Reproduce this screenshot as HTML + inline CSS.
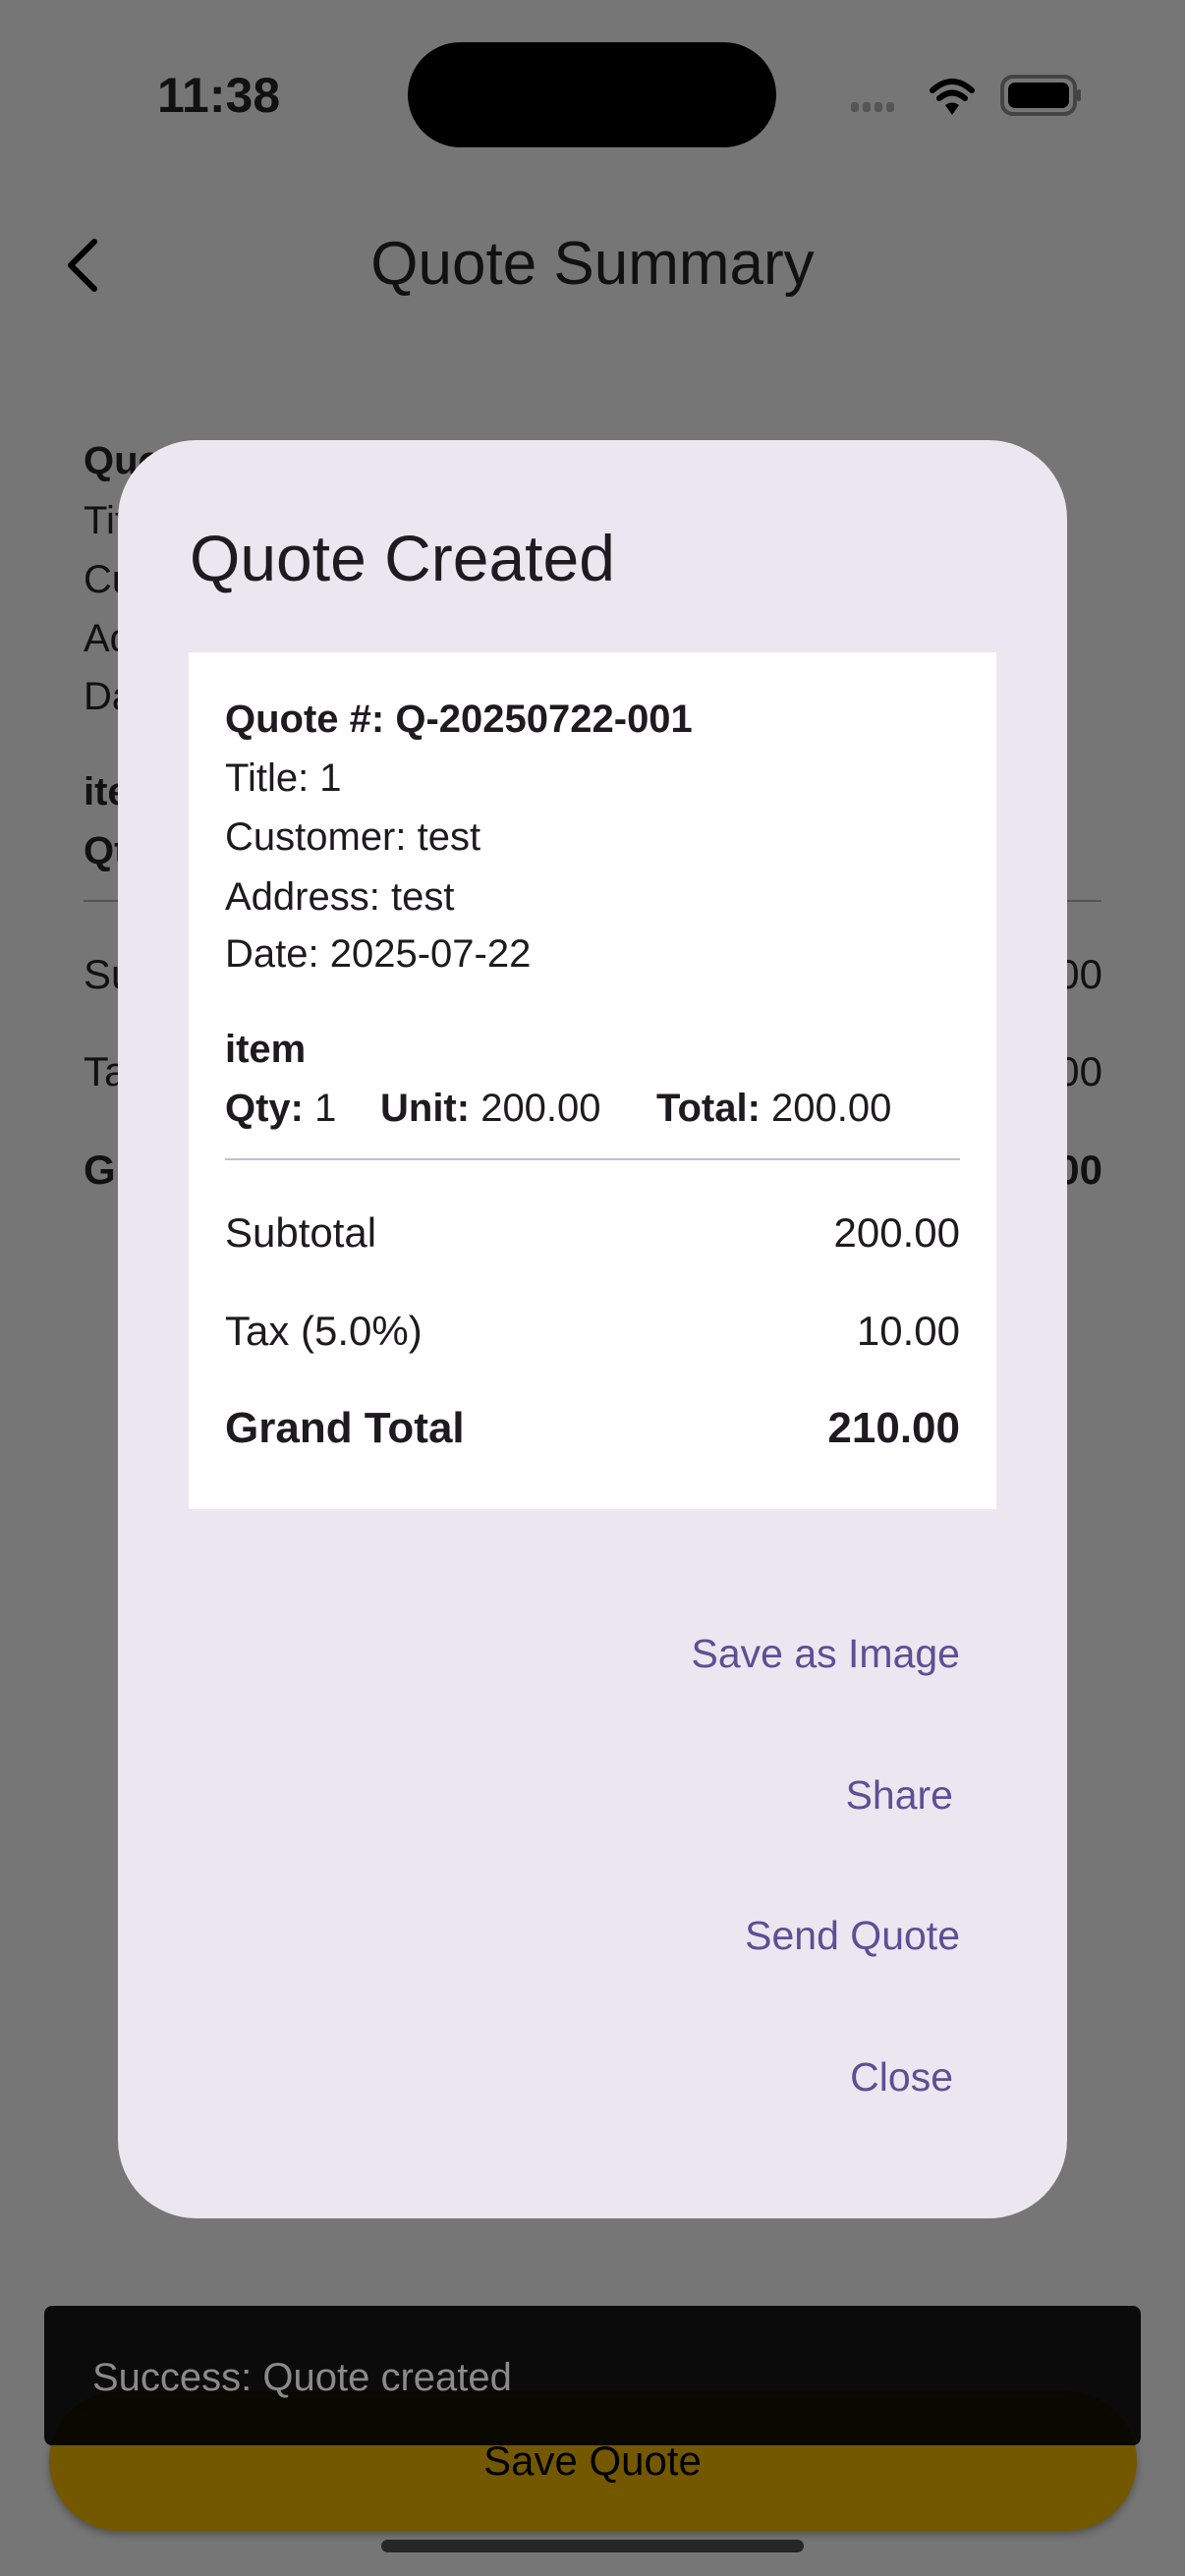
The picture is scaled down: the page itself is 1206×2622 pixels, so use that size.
<!DOCTYPE html>
<html><head><meta charset="utf-8"><style>
*{margin:0;padding:0;box-sizing:border-box}
body{width:1206px;height:2622px;background:#767676;position:relative;overflow:hidden;font-family:"Liberation Sans",sans-serif;color:#1d1b20}
.a{position:absolute;white-space:nowrap}
.bg{left:85px;font-size:40px;color:#111}
.c{left:229px;font-size:40px;color:#1d1b20}
.r{right:229px;font-size:42px;text-align:right}
.btn{font-size:41px;color:#5d4f93}
</style></head><body>
<div class="a" style="left:160px;top:68px;font-size:50px;font-weight:bold;color:#111">11:38</div>
<div class="a" style="left:415px;top:43px;width:375px;height:107px;border-radius:54px;background:#000"></div>
<svg class="a" style="left:860px;top:70px" width="240" height="60" viewBox="0 0 240 60">
<g fill="#555"><rect x="6" y="34" width="8" height="10" rx="3"/><rect x="18" y="34" width="8" height="10" rx="3"/><rect x="30" y="34" width="8" height="10" rx="3"/><rect x="42" y="34" width="8" height="10" rx="3"/></g>
<g fill="none" stroke="#000" stroke-width="6" stroke-linecap="round"><path d="M89 22 Q109 4 129 22"/><path d="M96 30 Q109 19 122 30"/></g>
<path d="M102 37 L109 47 L116 37 Q109 32 102 37Z" fill="#000"/>
<rect x="160" y="8" width="74" height="38" rx="11" fill="none" stroke="#444" stroke-width="4"/>
<rect x="166" y="14" width="62" height="26" rx="7" fill="#000"/>
<rect x="236" y="21" width="4" height="12" rx="2" fill="#444"/>
</svg>
<svg class="a" style="left:62px;top:240px" width="44" height="60" viewBox="0 0 44 60"><path d="M34 6 L10 30 L34 54" fill="none" stroke="#000" stroke-width="6" stroke-linecap="round" stroke-linejoin="round"/></svg>
<div class="a" style="left:0;width:1206px;text-align:center;top:233px;font-size:62px;color:#111">Quote Summary</div>

<div class="a bg" style="top:447px;font-weight:bold">Quote</div>
<div class="a bg" style="top:508px">Title</div>
<div class="a bg" style="top:568px">Customer</div>
<div class="a bg" style="top:628px">Address</div>
<div class="a bg" style="top:687px">Date</div>
<div class="a bg" style="top:784px;font-weight:bold">item</div>
<div class="a bg" style="top:844px;font-weight:bold">Qty</div>
<div class="a" style="left:85px;width:1036px;top:916px;height:2px;background:#555"></div>
<div class="a bg" style="top:968px;font-size:42px">Subtotal</div>
<div class="a" style="right:84px;top:968px;font-size:42px;color:#111">200.00</div>
<div class="a bg" style="top:1067px;font-size:42px">Tax</div>
<div class="a" style="right:84px;top:1067px;font-size:42px;color:#111">10.00</div>
<div class="a bg" style="top:1167px;font-size:42px;font-weight:bold">Grand</div>
<div class="a" style="right:84px;top:1167px;font-size:42px;color:#111;font-weight:bold">210.00</div>

<div class="a" style="left:120px;top:448px;width:966px;height:1810px;border-radius:80px;background:#ece6f0"></div>
<div class="a" style="left:193px;top:530px;font-size:66px">Quote Created</div>
<div class="a" style="left:192px;top:664px;width:822px;height:872px;background:#fff"></div>
<div class="a c" style="top:710px;font-weight:bold">Quote #: Q-20250722-001</div>
<div class="a c" style="top:770px">Title: 1</div>
<div class="a c" style="top:830px">Customer: test</div>
<div class="a c" style="top:891px">Address: test</div>
<div class="a c" style="top:949px">Date: 2025-07-22</div>
<div class="a c" style="top:1046px;font-weight:bold">item</div>
<div class="a c" style="top:1106px"><b>Qty:</b> 1</div>
<div class="a c" style="left:387px;top:1106px"><b>Unit:</b> 200.00</div>
<div class="a c" style="left:668px;top:1106px"><b>Total:</b> 200.00</div>
<div class="a" style="left:229px;width:748px;top:1179px;height:2px;background:#c4bfd0"></div>
<div class="a c" style="top:1231px;font-size:42px">Subtotal</div>
<div class="a r" style="top:1231px">200.00</div>
<div class="a c" style="top:1331px;font-size:42px">Tax (5.0%)</div>
<div class="a r" style="top:1331px">10.00</div>
<div class="a c" style="top:1429px;font-size:44px;font-weight:bold">Grand Total</div>
<div class="a r" style="top:1429px;font-size:44px;font-weight:bold">210.00</div>

<div class="a btn" style="right:229px;top:1660px">Save as Image</div>
<div class="a btn" style="right:236px;top:1804px">Share</div>
<div class="a btn" style="right:229px;top:1947px">Send Quote</div>
<div class="a btn" style="right:236px;top:2091px">Close</div>

<div class="a" style="left:50px;top:2434px;width:1107px;height:142px;border-radius:71px;background:#735800;box-shadow:0 4px 8px rgba(0,0,0,.3)"></div>
<div class="a" style="left:0;width:1206px;text-align:center;top:2481px;font-size:42px;color:#000">Save Quote</div>
<div class="a" style="left:45px;top:2347px;width:1116px;height:142px;border-radius:8px;background:rgba(0,0,0,.9)"></div>
<div class="a" style="left:94px;top:2398px;font-size:40px;color:#8a8a8a">Success: Quote created</div>
<div class="a" style="left:388px;top:2585px;width:430px;height:13px;border-radius:7px;background:#262626"></div>
</body></html>
